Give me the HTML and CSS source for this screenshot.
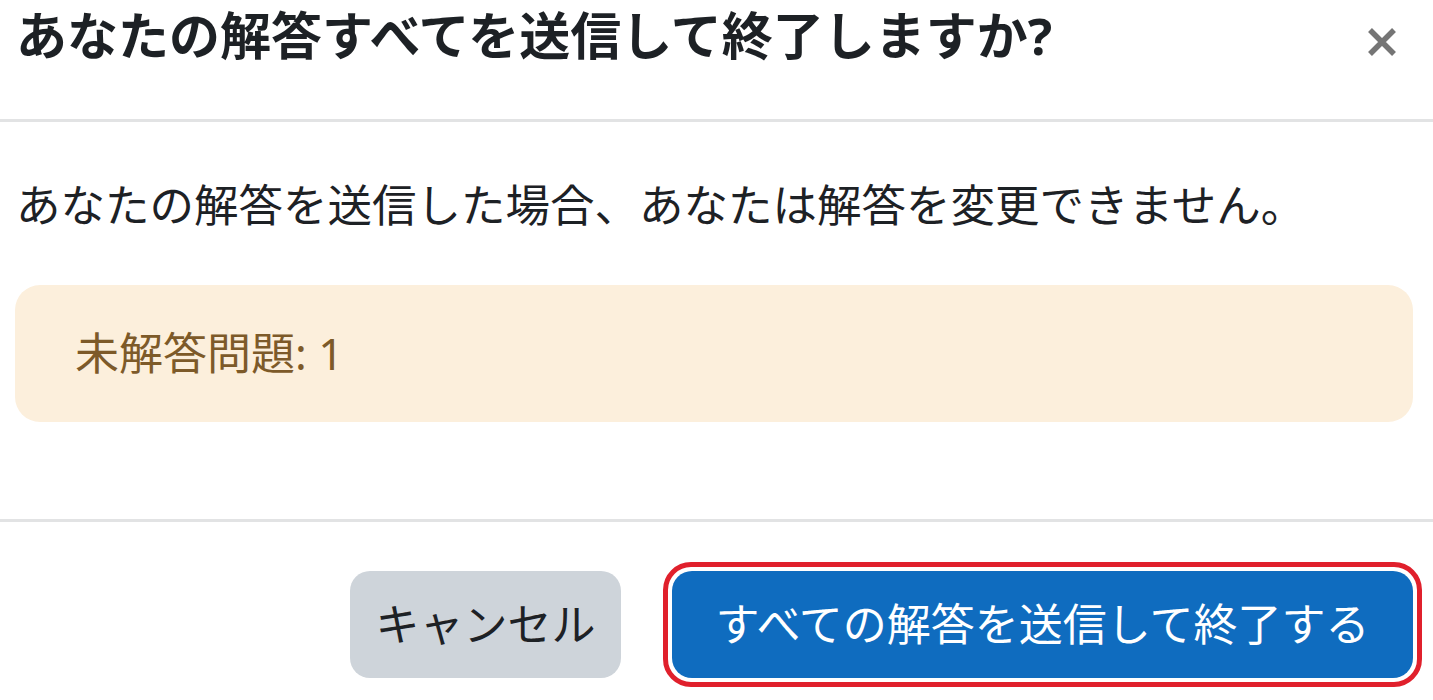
FILE: index.html
```html
<!DOCTYPE html>
<html lang="ja">
<head>
  <meta charset="UTF-8" />
  <title>解答を送信</title>
  <link rel="stylesheet" href="styles.css">
</head>
<body>
  <div class="modal">
    <div class="modal-header">
      <h5 class="modal-title">あなたの解答すべてを送信して終了しますか?</h5>
      <button class="close" type="button" aria-label="閉じる">
        <svg width="30" height="30" viewBox="0 0 30 30">
          <path d="M3 3 L27 27 M27 3 L3 27" stroke="#757575" stroke-width="5.5" stroke-linecap="butt" />
        </svg>
      </button>
    </div>

    <div class="modal-body">
      <p>あなたの解答を送信した場合、あなたは解答を変更できません。</p>
      <div class="alert">未解答問題: 1</div>
    </div>

    <div class="modal-footer">
      <button class="btn btn-secondary" type="button">キャンセル</button>
      <span class="highlight">
        <button class="btn btn-primary" type="button">すべての解答を送信して終了する</button>
      </span>
    </div>
  </div>
</body>
</html>
```

FILE: styles.css
```css
body {
  margin: 0;
  background: #fff;
  font-family: "Noto Sans", "Noto Sans CJK JP", sans-serif;
  color: #1d2125;
}

.modal {
  width: 1433px;
}

.modal-header {
  display: flex;
  align-items: flex-start;
  justify-content: space-between;
  padding: 5px 36px 54px 16px;
  border-bottom: 3px solid #e2e3e4;
}

.modal-title {
  margin: 0;
  font-size: 51px;
  line-height: 60px;
  font-weight: 700;
}

.close {
  border: none;
  background: none;
  padding: 0;
  margin-top: 22px;
  cursor: pointer;
}

.close svg {
  display: block;
}

.modal-body {
  padding: 50px 20px 97px 15px;
}

.modal-body p {
  margin: 0 0 47px 1px;
  font-size: 44.5px;
  line-height: 66px;
}

.alert {
  background-color: #fcefdc;
  color: #7d5a29;
  border-radius: 25px;
  padding: 35px 60px 36px;
  font-size: 44px;
  line-height: 66px;
}

.modal-footer {
  display: flex;
  justify-content: flex-end;
  align-items: center;
  gap: 42px;
  padding: 40px 11px 10px 0;
  border-top: 3px solid #e2e3e4;
}

.btn {
  border: none;
  border-radius: 20px;
  height: 107px;
  padding: 0 0 6px;
  font-family: inherit;
  font-size: 44px;
  white-space: nowrap;
  text-align: center;
  cursor: pointer;
}

.btn-secondary {
  background-color: #ced4da;
  color: #1d2125;
  width: 271px;
}

.btn-primary {
  background-color: #0f6cbf;
  color: #fff;
  width: 741px;
}

.highlight {
  display: block;
  border: 5px solid #e0202c;
  border-radius: 28px;
  padding: 4px;
  background: #fff;
}

.highlight .btn {
  display: block;
}
```
